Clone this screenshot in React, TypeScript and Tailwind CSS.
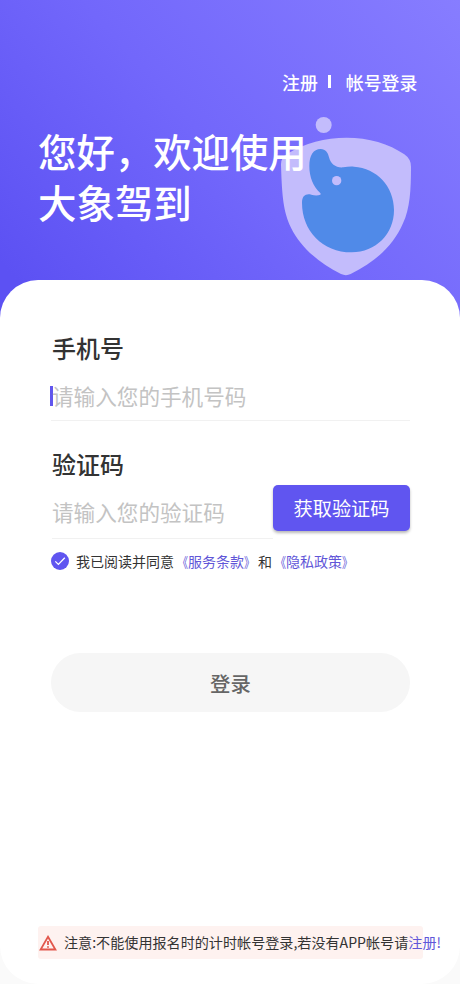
import { useState } from "react";

const ElephantShield = () => (
  <svg
    viewBox="60 198 396 480"
    className="absolute left-[280px] top-[116px] h-[160px] w-[132px]"
  >
    <circle cx="191" cy="225" r="24" fill="#c3bcfc" />
    <path
      fill="#c3bcfc"
      d="M260 263C325 263 388 281 433 313Q453 327 453 350C453 420 450 475 429 520C400 588 345 636 272 672Q258 679 243 672C180 641 122 593 93 533C70 485 66 440 63 345Q62 322 82 311C135 279 195 263 260 263Z"
    />
    <path
      fill="#508ae8"
      d="M182 297C197 297 204 308 207 322C212 343 228 354 250 352C262 350 272 349 282 350C350 354 402 409 402 480C402 552 347 607 275 607C187 607 126 542 126 458C126 438 137 430 154 434C164 437 174 437 181 434Q184 431 180 428C160 409 148 382 148 348C148 316 160 297 182 297Z"
    />
    <circle cx="230" cy="392" r="14" fill="#c3bcfc" />
  </svg>
);

const WarningIcon = () => (
  <svg
    viewBox="0 0 18 16"
    fill="none"
    stroke="#e2574c"
    strokeWidth={1.8}
    className="h-4 w-[18px] shrink-0"
  >
    <path strokeLinejoin="miter" d="M9 1.8L16.4 14.5H1.6Z" />
    <path d="M9 6V10M9 11.2V12.8" />
  </svg>
);

const PolicyLink = ({ title }: { readonly title: string }) => (
  <a className="flex text-[#6156d8]">
    <span className="w-[14px] origin-right scale-x-75">《</span>
    <span>{title}</span>
    <span className="w-[14px] origin-left scale-x-75">》</span>
  </a>
);

export default function App() {
  const [agreed, setAgreed] = useState(true);

  return (
    <div className="flex h-[984px] w-[460px] flex-col overflow-hidden bg-[#fafafa] font-['Noto_Sans_CJK_SC',sans-serif]">
      <header className="relative h-[330px] shrink-0 bg-[linear-gradient(48deg,#5c51f3_8%,#7267fb_50%,#877dff_100%)] pt-[69px] text-white">
        <ElephantShield />
        <nav className="relative flex h-[27px] items-start whitespace-nowrap pl-[282px] text-[17.9px] font-medium leading-[27px]">
          <a>注册</a>
          <span className="ml-[10px] mt-[6px] h-[13px] w-[3px] bg-white" />
          <a className="ml-[15px]">帐号登录</a>
        </nav>
        <h1 className="relative mt-[29px] pl-[38px] text-[38.4px] font-medium leading-[51px]">
          您好，欢迎使用
          <br />
          大象驾到
        </h1>
      </header>

      <main className="relative -mt-[50px] flex flex-1 flex-col rounded-[38px] bg-white pl-[51px] pr-[50px] pt-[50px]">
        <label className="pl-px text-[24px] font-medium leading-[36px] text-[#333]">手机号</label>
        <div className="mt-[10px] flex h-[45px] items-start border-b border-[#f1f1f1]">
          <span className="-ml-px mt-[10px] h-5 w-[3px] shrink-0 bg-[#6156ee]" />
          <span className="-ml-px text-[21.6px] leading-[40px] text-[#c3c3c3]">
            请输入您的手机号码
          </span>
        </div>

        <label className="mt-[25px] pl-px text-[24px] font-medium leading-[36px] text-[#333]">
          验证码
        </label>
        <div className="mt-[3px] flex h-[54px] items-start pl-px">
          <div className="h-[54px] w-[221px] shrink-0 border-b border-[#f1f1f1] pt-[8px] text-[21.6px] leading-[38px] text-[#c3c3c3]">
            请输入您的验证码
          </div>
          <button className="h-[46px] w-[137px] shrink-0 rounded-[5px] bg-[#6055f0] text-[19.2px] leading-[47px] text-white shadow-[0_2px_3px_rgba(0,0,0,0.28)]">
            获取验证码
          </button>
        </div>

        <div className="mt-[12px] flex h-[21px] items-center text-[14px] leading-[21px] text-[#333]">
          <button onClick={() => setAgreed(!agreed)} className="-mt-[2px] mr-[7px] shrink-0">
            <svg viewBox="0 0 18 18" className="h-[18px] w-[18px]">
              <circle cx="9" cy="9" r="9" fill={agreed ? "#6055f0" : "#ddd"} />
              <path d="M4.3 9.4L7.4 12.4L13.8 5.8" fill="none" stroke="#fff" strokeWidth={1.3} />
            </svg>
          </button>
          <span>我已阅读并同意</span>
          <PolicyLink title="服务条款" />
          <span>和</span>
          <PolicyLink title="隐私政策" />
        </div>

        <button className="mt-[81px] h-[59px] w-[359px] rounded-full bg-[#f6f6f6] text-[20.4px] font-medium leading-[60px] text-[#666]">
          登录
        </button>

        <div className="-ml-[13px] mb-[25px] mt-auto flex h-[33px] w-[385px] items-center whitespace-nowrap rounded-[3px] bg-[#fef2f0] pl-px text-[14.1px] leading-[21px] text-[#333]">
          <WarningIcon />
          <span className="ml-[7px]">注意:不能使用报名时的计时帐号登录,若没有APP帐号请</span>
          <a className="text-[#6156d8]">注册!</a>
        </div>
      </main>
    </div>
  );
}
